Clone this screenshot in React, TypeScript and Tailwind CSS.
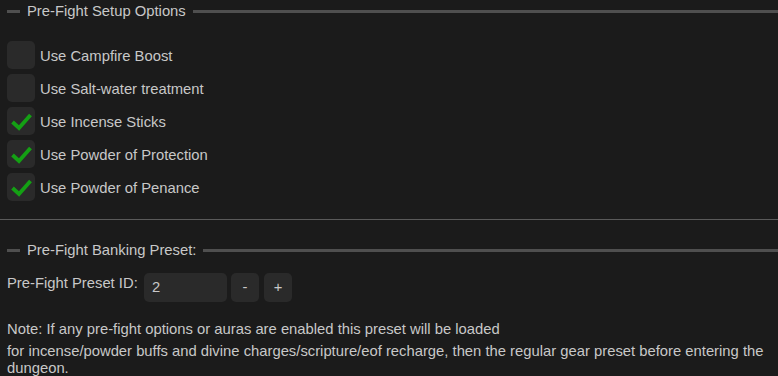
import React from 'react'

const options = [
  { label: 'Use Campfire Boost', checked: false },
  { label: 'Use Salt-water treatment', checked: false },
  { label: 'Use Incense Sticks', checked: true },
  { label: 'Use Powder of Protection', checked: true },
  { label: 'Use Powder of Penance', checked: true },
]

function SectionHeader({ title }: { title: string }) {
  return (
    <div className="flex items-center h-[22px]">
      <div className="w-[13px] h-[3px] bg-[#4f4f4f]" />
      <span className="px-[7px] text-[#c8c8c8]">{title}</span>
      <div className="flex-1 h-[3px] bg-[#4f4f4f]" />
    </div>
  )
}

function Checkbox({ label, checked }: { label: string; checked: boolean }) {
  return (
    <div className="flex items-center gap-[5px] h-7">
      <div className="w-7 h-7 rounded-[5px] bg-[#2a2a2a] flex items-center justify-center">
        {checked && (
          <svg width="28" height="28" viewBox="0 0 28 28" className="block">
            <path d="M5.5 15 L12 21 L23.5 8" fill="none" stroke="#14a014" strokeWidth="3.8" strokeLinecap="butt" />
          </svg>
        )}
      </div>
      <span className="text-[#c8c8c8] pt-[2px]">{label}</span>
    </div>
  )
}

export default function App() {
  return (
    <div
      className="w-[778px] h-[376px] overflow-hidden bg-[#1b1b1b] text-[14.8px] leading-[17px]"
      style={{ fontFamily: '"Liberation Sans", Arial, sans-serif' }}
    >
      <div className="pl-[7px]">
        <SectionHeader title="Pre-Fight Setup Options" />
      </div>
      <div className="flex flex-col gap-[5px] pl-[7px] mt-[19px]">
        {options.map((o) => (
          <Checkbox key={o.label} {...o} />
        ))}
      </div>
      <div className="mt-[18px] h-px bg-[#5a5a5a]" />
      <div className="pl-[7px] mt-[19px]">
        <SectionHeader title="Pre-Fight Banking Preset:" />
      </div>
      <div className="flex items-start pl-[7px] mt-[12px]">
        <span className="text-[#c8c8c8] w-[137px] pt-[2px]">Pre-Fight Preset ID:</span>
        <div className="w-[83px] h-[29px] rounded-[5px] bg-[#2a2a2a] text-[#c8c8c8] flex items-center pl-2">2</div>
        <div className="ml-1 w-[28px] h-[29px] rounded-[5px] bg-[#2a2a2a] text-[#c8c8c8] flex items-center justify-center">-</div>
        <div className="ml-[5px] w-[28px] h-[29px] rounded-[5px] bg-[#2a2a2a] text-[#c8c8c8] flex items-center justify-center">+</div>
      </div>
      <div className="pl-[7px] pr-[4px] mt-[19px] text-[#c8c8c8]">
        <div>Note: If any pre-fight options or auras are enabled this preset will be loaded</div>
        <div className="mt-[5px]">
          for incense/powder buffs and divine charges/scripture/eof recharge, then the regular gear preset before entering the dungeon.
        </div>
      </div>
    </div>
  )
}
